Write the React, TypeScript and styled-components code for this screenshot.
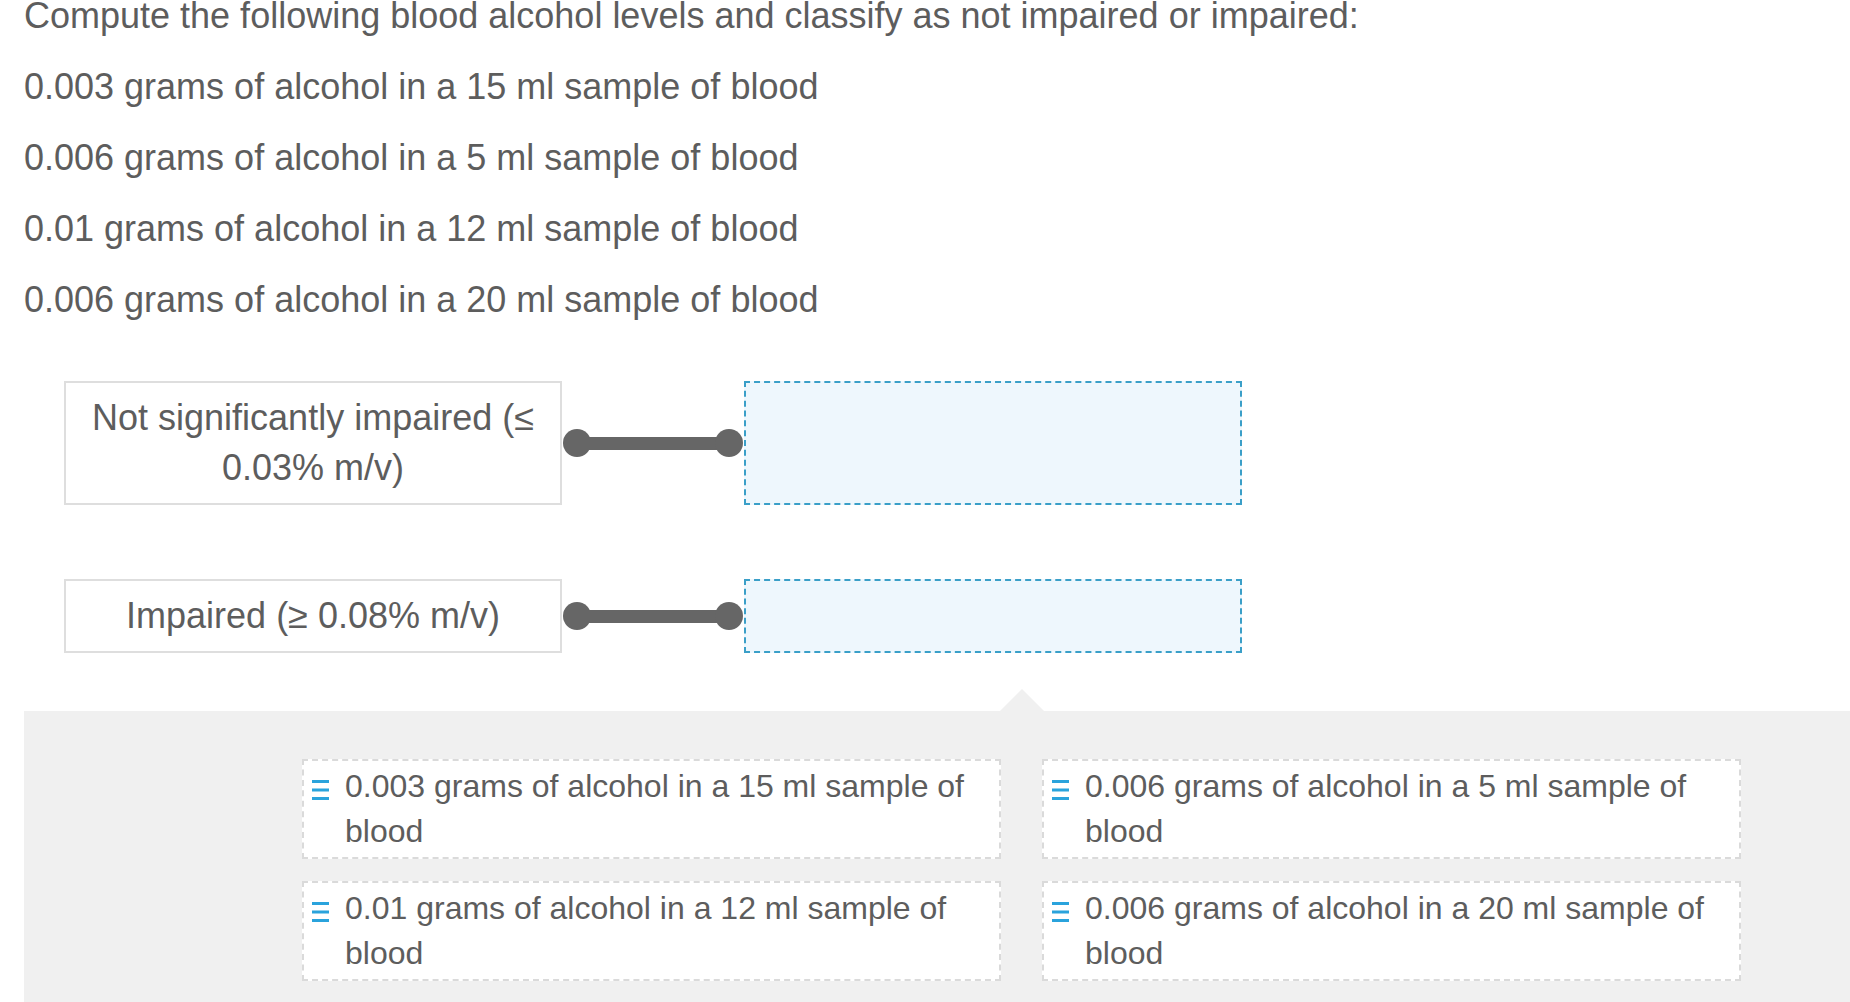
import React from "react";
import styled, { createGlobalStyle } from "styled-components";

const GlobalStyle = createGlobalStyle`
  html, body {
    margin: 0;
    padding: 0;
    overflow: hidden;
    background: #ffffff;
  }
  body {
    font-family: "Liberation Sans", Arial, sans-serif;
    color: #5d5d5d;
  }
`;

const prompts = [
  "Compute the following blood alcohol levels and classify as not impaired or impaired:",
  "0.003 grams of alcohol in a 15 ml sample of blood",
  "0.006 grams of alcohol in a 5 ml sample of blood",
  "0.01 grams of alcohol in a 12 ml sample of blood",
  "0.006 grams of alcohol in a 20 ml sample of blood",
];

const categories = [
  "Not significantly impaired (≤ 0.03% m/v)",
  "Impaired (≥ 0.08% m/v)",
];

const items = [
  "0.003 grams of alcohol in a 15 ml sample of blood",
  "0.006 grams of alcohol in a 5 ml sample of blood",
  "0.01 grams of alcohol in a 12 ml sample of blood",
  "0.006 grams of alcohol in a 20 ml sample of blood",
];

const DragHandle = () => (
  <HandleIcon width="17" height="20" viewBox="0 0 17 20">
    <rect x="0" y="0" width="17" height="3" fill="currentColor" />
    <rect x="0" y="8.5" width="17" height="3" fill="currentColor" />
    <rect x="0" y="17" width="17" height="3" fill="currentColor" />
  </HandleIcon>
);

export default function App() {
  return (
    <>
      <GlobalStyle />
      <Page>
        <Prompt>
          {prompts.map((p, i) => (
            <PromptLine key={i}>{p}</PromptLine>
          ))}
        </Prompt>

        <MatchArea>
          {categories.map((c) => (
            <MatchRow key={c}>
              <CategoryBox>{c}</CategoryBox>
              <Connector>
                <Dot />
                <Bar />
                <Dot />
              </Connector>
              <DropZone />
            </MatchRow>
          ))}
        </MatchArea>

        <Pool>
          <CardGrid>
            {items.map((t) => (
              <Card key={t}>
                <DragHandle />
                <CardText>{t}</CardText>
              </Card>
            ))}
          </CardGrid>
        </Pool>
      </Page>
    </>
  );
}

const Page = styled.div`
  width: 1826px;
  margin-top: -9px;
  padding-left: 24px;
`;

const Prompt = styled.div`
  display: flex;
  flex-direction: column;
  gap: 21px;
`;

const PromptLine = styled.p`
  margin: 0;
  font-size: 36px;
  line-height: 50px;
  white-space: nowrap;
`;

const MatchArea = styled.div`
  margin-top: 56px;
  padding-left: 40px;
  display: flex;
  flex-direction: column;
  gap: 74px;
`;

const MatchRow = styled.div`
  display: flex;
  align-items: stretch;
`;

const CategoryBox = styled.div`
  box-sizing: border-box;
  width: 498px;
  border: 2px solid #dedede;
  padding: 10px 16px;
  font-size: 36px;
  line-height: 50px;
  text-align: center;
  background: #ffffff;
`;

const Connector = styled.div`
  width: 182px;
  display: flex;
  align-items: center;
  padding: 0 1px;
  box-sizing: border-box;
`;

const Dot = styled.span`
  flex: none;
  width: 28px;
  height: 28px;
  border-radius: 50%;
  background: #666666;
`;

const Bar = styled.span`
  flex: 1;
  height: 13px;
  margin: 0 -4px;
  background: #666666;
`;

const DropZone = styled.div`
  box-sizing: border-box;
  width: 498px;
  border: 2px dashed #3a9fc8;
  background: #eef7fd;
`;

const Pool = styled.div`
  position: relative;
  margin-top: 58px;
  padding: 48px 0 40px 278px;
  background: #f0f0f0;

  &::before {
    content: "";
    position: absolute;
    left: 976px;
    top: -22px;
    border-left: 22px solid transparent;
    border-right: 22px solid transparent;
    border-bottom: 22px solid #f0f0f0;
  }
`;

const CardGrid = styled.div`
  display: grid;
  grid-template-columns: 699px 699px;
  column-gap: 41px;
  row-gap: 22px;
`;

const Card = styled.div`
  box-sizing: border-box;
  display: flex;
  align-items: flex-start;
  gap: 16px;
  padding: 3px 10px 3px 8px;
  border: 2px dashed #dadada;
  background: #ffffff;
`;

const HandleIcon = styled.svg`
  flex: none;
  margin-top: 16px;
  color: #2aa3dc;
`;

const CardText = styled.span`
  font-size: 32px;
  line-height: 45px;
`;
